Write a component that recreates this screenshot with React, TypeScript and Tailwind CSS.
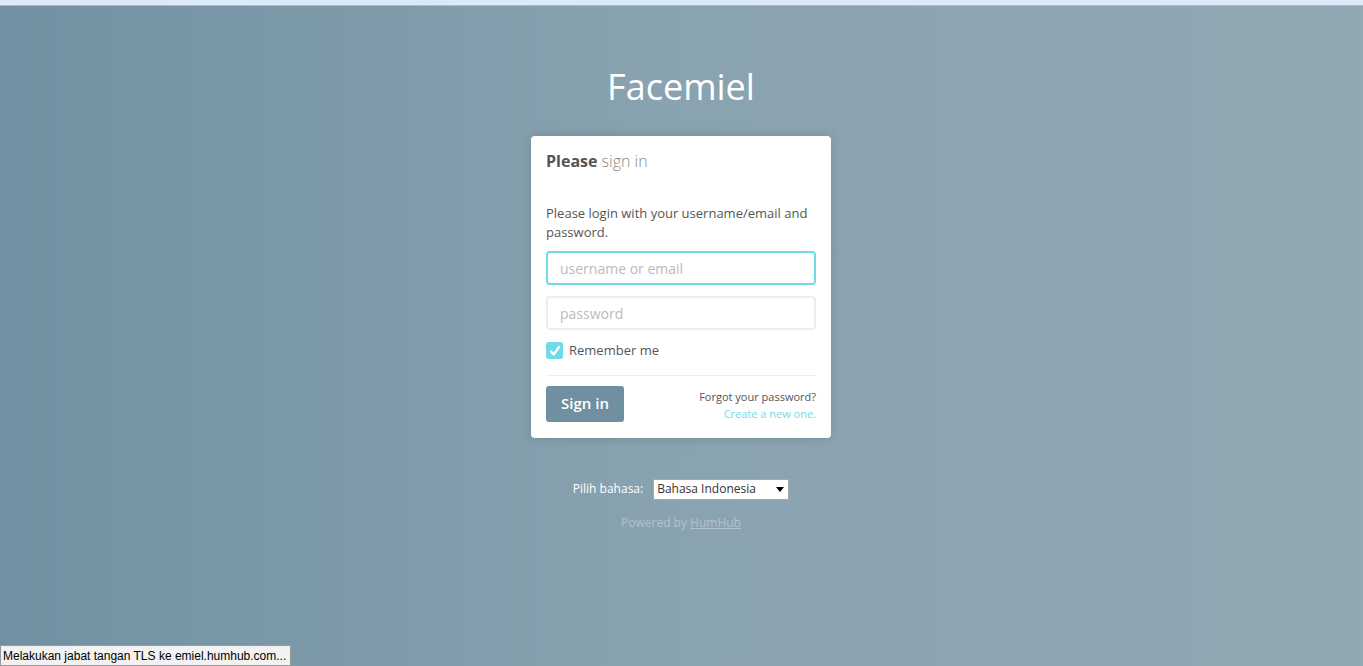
import React, { useState } from 'react';

const App: React.FC = () => {
  const [remember, setRemember] = useState(true);

  return (
    <div
      className="relative h-screen w-full overflow-hidden bg-[linear-gradient(to_right,#7191a2_0%,#8aa3b0_50%,#92a8b3_100%)]"
      style={{ fontFamily: '"Open Sans", "Noto Sans", sans-serif' }}
    >
      {/* browser strip */}
      <div className="h-[6px] w-full bg-[#dbe9f8] border-b border-[#a9bccf]" />

      <div className="flex flex-col items-center pr-[1px]">
        <h1 className="mt-[61px] text-[36px] leading-[40px] text-white">Facemiel</h1>

        {/* Login card */}
        <div className="mt-[29px] w-[300px] rounded-[4px] bg-white px-[15px] pt-[14px] pb-[16px] shadow-[0_0_12px_rgba(0,0,0,0.15)]">
          <div className="text-[16px] leading-[22px] text-[#555]">
            <span className="font-bold">Please</span> <span className="font-light text-[#888]">sign in</span>
          </div>

          <p className="mt-[32px] text-[13px] leading-[19px] text-[#555]">
            Please login with your username/email and password.
          </p>

          <input
            type="text"
            placeholder="username or email"
            className="mt-[9px] block h-[34px] w-full rounded-[4px] border-2 border-[#6fdbe8] px-[12px] text-[14px] text-[#555] outline-none placeholder:text-[#bbb]"
          />
          <input
            type="password"
            placeholder="password"
            className="mt-[11px] block h-[34px] w-full rounded-[4px] border-2 border-[#ededed] px-[12px] text-[14px] text-[#555] outline-none placeholder:text-[#bbb]"
          />

          <label className="mt-[11px] flex cursor-pointer items-center gap-[6px]" onClick={() => setRemember(!remember)}>
            <span className="flex h-[17px] w-[17px] items-center justify-center rounded-[3px] bg-[#6fdbe8]">
              {remember && (
                <svg width="12" height="12" viewBox="0 0 12 12">
                  <path d="M2 6.5 L4.8 9.5 L10 2" stroke="white" strokeWidth="2.2" fill="none" strokeLinecap="round" strokeLinejoin="round" />
                </svg>
              )}
            </span>
            <span className="text-[13px] text-[#555]">Remember me</span>
          </label>

          <hr className="mt-[14px] border-t border-[#eee]" />

          <div className="mt-[10px] flex items-start justify-between">
            <button className="h-[36px] w-[78px] rounded-[3px] bg-[#708fa0] text-[15px] font-semibold text-white">
              Sign in
            </button>
            <div className="pt-[2px] text-right text-[11px] leading-[17px]">
              <div className="text-[#555]">Forgot your password?</div>
              <a href="#" className="text-[#6fdbe8]">Create a new one.</a>
            </div>
          </div>
        </div>

        {/* Language */}
        <div className="mt-[41px] flex items-center gap-[10px]">
          <span className="text-[12px] text-white">Pilih bahasa:</span>
          <div className="flex h-[21px] w-[136px] items-center justify-between border border-[#a9a9a9] bg-white pl-[3px] pr-[4px]">
            <span className="text-[12px] text-[#333]">Bahasa Indonesia</span>
            <svg width="8" height="5" viewBox="0 0 8 5">
              <path d="M0 0 L8 0 L4 5 Z" fill="#000" />
            </svg>
          </div>
        </div>

        <div className="mt-[14px] text-[12px] text-[#b3c3cb]">
          Powered by <a href="#" className="underline">HumHub</a>
        </div>
      </div>

      {/* status bar */}
      <div
        className="absolute bottom-0 left-0 flex h-[21px] items-center whitespace-nowrap border border-[#9a9a9a] bg-[#f2f2f2] pl-[2px] pr-[4px] text-[12px] text-black"
        style={{ fontFamily: '"Liberation Sans", Arial, sans-serif' }}
      >
        Melakukan jabat tangan TLS ke emiel.humhub.com...
      </div>
    </div>
  );
};

export default App;
